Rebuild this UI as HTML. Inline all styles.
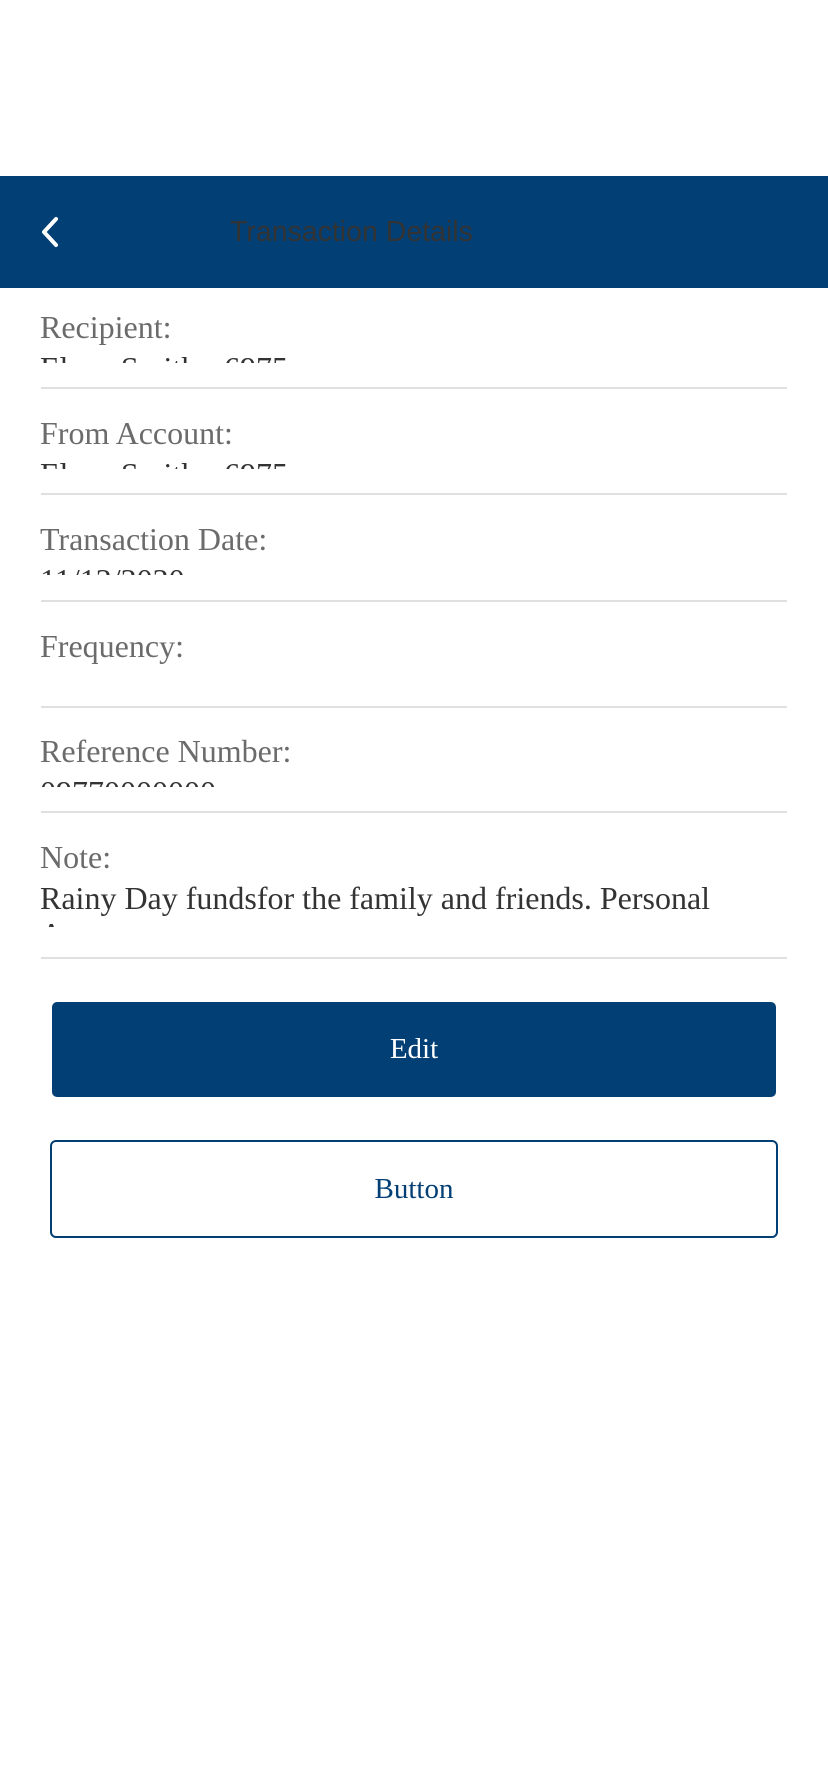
<!DOCTYPE html>
<html><head><meta charset="utf-8"><style>
html,body{margin:0;padding:0;background:#fff;}
body{width:828px;height:1792px;position:relative;overflow:hidden;font-family:"Liberation Serif",serif;}
.hdr{position:absolute;left:0;top:176px;width:828px;height:112px;background:#023f75;}
.title{position:absolute;left:230px;top:214px;font:28.5px/36px "Liberation Sans",sans-serif;color:#333;white-space:nowrap;}
.lbl{position:absolute;left:40px;font-size:32px;line-height:36px;color:#6b6b6b;white-space:nowrap;}
.val{position:absolute;left:40px;width:760px;overflow:hidden;font-size:32px;line-height:36px;color:#333;}
.div{position:absolute;left:41px;width:746px;height:2px;background:#e0e0e0;}
.btn{position:absolute;left:52px;width:724px;top:1002px;height:95px;background:#023f75;border-radius:5px;color:#fff;font-size:29px;text-align:center;line-height:95px;}
.btn2{position:absolute;left:50px;width:724px;top:1140px;height:94px;border:2px solid #023f75;border-radius:6px;color:#023f75;font-size:29px;text-align:center;line-height:94px;}
</style></head><body>
<div class="hdr"></div>
<svg style="position:absolute;left:36px;top:214px" width="28" height="36" viewBox="0 0 28 36"><path d="M20 5 L8 18 L20 31" fill="none" stroke="#fff" stroke-width="4" stroke-linecap="round" stroke-linejoin="round"/></svg>
<div class="title">Transaction Details</div>

<div class="lbl" style="top:309px">Recipient:</div>
<div class="val" style="top:350px;height:13px">Elena Smith - 6975</div>
<div class="div" style="top:387px"></div>

<div class="lbl" style="top:415px">From Account:</div>
<div class="val" style="top:456px;height:13px">Elena Smith - 6975</div>
<div class="div" style="top:493px"></div>

<div class="lbl" style="top:521px">Transaction Date:</div>
<div class="val" style="top:562px;height:13px">11/12/2020</div>
<div class="div" style="top:600px"></div>

<div class="lbl" style="top:628px">Frequency:</div>
<div class="div" style="top:706px"></div>

<div class="lbl" style="top:733px">Reference Number:</div>
<div class="val" style="top:774px;height:13px">09770000000</div>
<div class="div" style="top:811px"></div>

<div class="lbl" style="top:839px">Note:</div>
<div class="val" style="top:880px;height:47px">Rainy Day fundsfor the family and friends. Personal Account</div>
<div class="div" style="top:957px"></div>

<div class="btn">Edit</div>
<div class="btn2">Button</div>
</body></html>
